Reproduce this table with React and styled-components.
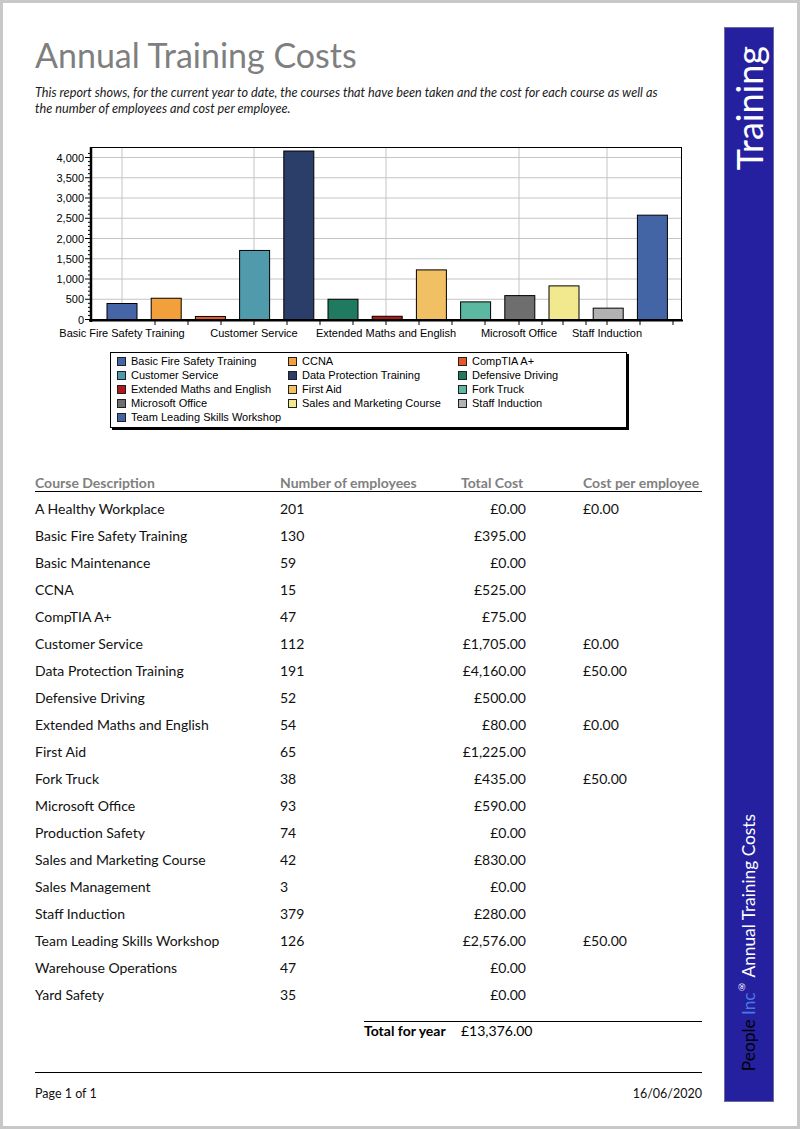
import React from 'react';
import styled, { createGlobalStyle } from 'styled-components';

const GlobalStyle = createGlobalStyle`
  body {
    margin: 0;
    background: #ffffff;
    font-family: Lato, "Open Sans", sans-serif;
    color: #000000;
  }
`;

const courses = [
  { name: 'Basic Fire Safety Training', value: 395, color: '#4565a6' },
  { name: 'CCNA', value: 525, color: '#f2a03c' },
  { name: 'CompTIA A+', value: 75, color: '#e4582a' },
  { name: 'Customer Service', value: 1705, color: '#4f9aab' },
  { name: 'Data Protection Training', value: 4160, color: '#2b3d69' },
  { name: 'Defensive Driving', value: 500, color: '#1f7a5f' },
  { name: 'Extended Maths and English', value: 80, color: '#b01818' },
  { name: 'First Aid', value: 1225, color: '#f1c062' },
  { name: 'Fork Truck', value: 435, color: '#5ab9a0' },
  { name: 'Microsoft Office', value: 590, color: '#6e6e6e' },
  { name: 'Sales and Marketing Course', value: 830, color: '#f2e98e' },
  { name: 'Staff Induction', value: 280, color: '#b2b2b2' },
  { name: 'Team Leading Skills Workshop', value: 2576, color: '#4465a5' },
];

const rows = [
  ['A Healthy Workplace', '201', '£0.00', '£0.00'],
  ['Basic Fire Safety Training', '130', '£395.00', ''],
  ['Basic Maintenance', '59', '£0.00', ''],
  ['CCNA', '15', '£525.00', ''],
  ['CompTIA A+', '47', '£75.00', ''],
  ['Customer Service', '112', '£1,705.00', '£0.00'],
  ['Data Protection Training', '191', '£4,160.00', '£50.00'],
  ['Defensive Driving', '52', '£500.00', ''],
  ['Extended Maths and English', '54', '£80.00', '£0.00'],
  ['First Aid', '65', '£1,225.00', ''],
  ['Fork Truck', '38', '£435.00', '£50.00'],
  ['Microsoft Office', '93', '£590.00', ''],
  ['Production Safety', '74', '£0.00', ''],
  ['Sales and Marketing Course', '42', '£830.00', ''],
  ['Sales Management', '3', '£0.00', ''],
  ['Staff Induction', '379', '£280.00', ''],
  ['Team Leading Skills Workshop', '126', '£2,576.00', '£50.00'],
  ['Warehouse Operations', '47', '£0.00', ''],
  ['Yard Safety', '35', '£0.00', ''],
];

const Page = styled.div`
  width: 800px;
  height: 1129px;
  box-sizing: border-box;
  border: 3px solid #c8c8c8;
  padding-left: 32px;
  display: flex;
  overflow: hidden;
`;

const Main = styled.main`
  width: 667px;
  display: flex;
  flex-direction: column;
`;

const Title = styled.h1`
  margin: 31px 0 0;
  font-size: 34px;
  line-height: 42px;
  font-weight: 400;
  color: #7f7f7f;
`;

const Intro = styled.p`
  margin: 8px 0 0;
  font-size: 12.7px;
  line-height: 16px;
  font-style: italic;
  color: #1a1a1a;
  white-space: nowrap;
`;

const ChartSvg = styled.svg`
  display: block;
  margin: 24px 0 0 5px;
  font-family: "Liberation Sans", Arial, sans-serif;
  font-size: 11px;
`;

const Legend = styled.div`
  margin: 12px 0 0 75px;
  width: 517px;
  height: 76px;
  box-sizing: border-box;
  border: 1px solid #000000;
  box-shadow: 2px 2px 0 #000000;
  padding: 1px 0 0 6px;
  display: grid;
  grid-template-columns: 171px 170px 1fr;
  grid-auto-rows: 14px;
  font-family: "Liberation Sans", Arial, sans-serif;
  font-size: 11px;
`;

const LegendItem = styled.div`
  display: flex;
  align-items: center;
  gap: 5px;
  white-space: nowrap;
`;

const Swatch = styled.span`
  width: 7px;
  height: 7px;
  border: 1px solid #202020;
  background: ${p => p.color};
`;

const Grid = styled.div`
  display: grid;
  grid-template-columns: 245px 181px 65px 1fr;
`;

const HeadRow = styled(Grid)`
  margin-top: 47px;
  border-bottom: 1px solid #000000;
  font-size: 14px;
  line-height: 16px;
  font-weight: 700;
  color: #808080;
`;

const HeadCell = styled.div`
  white-space: nowrap;
  padding-left: ${p => p.indent || 0}px;
`;

const Body = styled.div`
  margin-top: 3px;
`;

const Row = styled(Grid)`
  height: 27px;
  align-items: center;
  font-size: 14px;
  color: #111111;
`;

const Cell = styled.div`
  white-space: nowrap;
  text-align: ${p => (p.right ? 'right' : 'left')};
  padding-left: ${p => p.indent || 0}px;
`;

const TotalRow = styled.div`
  margin: 13px 0 0 329px;
  border-top: 1px solid #000000;
  display: grid;
  grid-template-columns: 97px 65px;
  font-size: 14px;
  line-height: 16px;
  padding-top: 1px;
`;

const TotalLabel = styled.div`
  font-weight: 700;
`;

const TotalValue = styled.div`
  text-align: right;
`;

const Footer = styled.footer`
  margin-top: 33px;
  border-top: 1px solid #000000;
  padding-top: 13px;
  display: flex;
  justify-content: space-between;
  font-size: 12.5px;
  line-height: 16px;
  color: #111111;
`;

const Sidebar = styled.aside`
  margin: 24px 0 0 22px;
  width: 50px;
  height: 1075px;
  box-sizing: border-box;
  background: #2520a0;
  border: 1px solid #6b6b9c;
  padding: 18px 0 30px;
  display: flex;
  flex-direction: column;
  justify-content: space-between;
  align-items: center;
`;

const Vertical = styled.div`
  writing-mode: vertical-rl;
  transform: rotate(180deg);
  white-space: nowrap;
  font-size: ${p => p.size}px;
  line-height: 1;
  color: #ffffff;
`;

const Brand = styled.span`
  color: ${p => p.color};
`;

const Reg = styled.sup`
  font-size: 9px;
  vertical-align: super;
  line-height: 0;
`;

const yAt = v => 319.5 - v * 0.0405;
const gridX = [122, 254, 386, 519, 607];
const xLabels = [
  { x: 122, text: 'Basic Fire Safety Training' },
  { x: 254, text: 'Customer Service' },
  { x: 386, text: 'Extended Maths and English' },
  { x: 519, text: 'Microsoft Office' },
  { x: 607, text: 'Staff Induction' },
];
const xTicks = [155, 188, 221, 254, 287, 320, 353, 386, 419, 452, 485, 519, 542, 563, 586, 607, 640, 673];

const Chart = () => {
  const majors = [0, 500, 1000, 1500, 2000, 2500, 3000, 3500, 4000];
  const minors = [];
  for (let v = 100; v <= 4100; v += 100) {
    if (v % 500) minors.push(v);
  }
  return (
    <ChartSvg width="650" height="200" viewBox="40 140 650 200">
      {majors.slice(1).map(v => (
        <line key={'h' + v} x1="92" x2="681" y1={yAt(v)} y2={yAt(v)} stroke="#c4c4c4" />
      ))}
      {gridX.map(x => (
        <line key={'v' + x} x1={x} x2={x} y1="148" y2="319" stroke="#c4c4c4" />
      ))}
      <rect x="91" y="147.5" width="590.5" height="172" fill="none" stroke="#000" />
      {courses.map((c, i) => {
        const cx = 122 + i * 44.2;
        const top = yAt(c.value);
        return (
          <rect
            key={c.name}
            x={cx - 15}
            y={top}
            width="30"
            height={319.5 - top}
            fill={c.color}
            stroke="#000"
          />
        );
      })}
      <line x1="91" x2="91" y1="147" y2="322" stroke="#000" strokeWidth="2.5" />
      <line x1="89" x2="683" y1="320.5" y2="320.5" stroke="#000" strokeWidth="2" />
      {majors.map(v => (
        <g key={'m' + v}>
          <line x1="85" x2="91" y1={yAt(v)} y2={yAt(v)} stroke="#000" />
          <text x="84" y={yAt(v) + 4} textAnchor="end">
            {v.toLocaleString('en-GB')}
          </text>
        </g>
      ))}
      {minors.map(v => (
        <line key={'n' + v} x1="88" x2="91" y1={yAt(v)} y2={yAt(v)} stroke="#000" />
      ))}
      {xTicks.map(x => (
        <line key={'t' + x} x1={x} x2={x} y1="321" y2="325" stroke="#000" />
      ))}
      {xLabels.map(l => (
        <text key={l.text} x={l.x} y="337" textAnchor="middle">
          {l.text}
        </text>
      ))}
    </ChartSvg>
  );
};

export default function App() {
  return (
    <>
      <GlobalStyle />
      <Page>
        <Main>
          <Title>Annual Training Costs</Title>
          <Intro>
            This report shows, for the current year to date, the courses that have been taken and the cost for each course as well as
            <br />
            the number of employees and cost per employee.
          </Intro>
          <Chart />
          <Legend>
            {courses.map(c => (
              <LegendItem key={c.name}>
                <Swatch color={c.color} />
                {c.name}
              </LegendItem>
            ))}
          </Legend>
          <HeadRow>
            <HeadCell>Course Description</HeadCell>
            <HeadCell>Number of employees</HeadCell>
            <HeadCell>Total Cost</HeadCell>
            <HeadCell indent={57}>Cost per employee</HeadCell>
          </HeadRow>
          <Body>
            {rows.map(r => (
              <Row key={r[0]}>
                <Cell>{r[0]}</Cell>
                <Cell>{r[1]}</Cell>
                <Cell right>{r[2]}</Cell>
                <Cell indent={57}>{r[3]}</Cell>
              </Row>
            ))}
          </Body>
          <TotalRow>
            <TotalLabel>Total for year</TotalLabel>
            <TotalValue>£13,376.00</TotalValue>
          </TotalRow>
          <Footer>
            <span>Page 1 of 1</span>
            <span>16/06/2020</span>
          </Footer>
        </Main>
        <Sidebar>
          <Vertical size={36}>Training</Vertical>
          <Vertical size={17.3}>
            <Brand color="#000000">People </Brand>
            <Brand color="#4a7ae0">Inc</Brand>
            <Reg>®</Reg> Annual Training Costs
          </Vertical>
        </Sidebar>
      </Page>
    </>
  );
}
